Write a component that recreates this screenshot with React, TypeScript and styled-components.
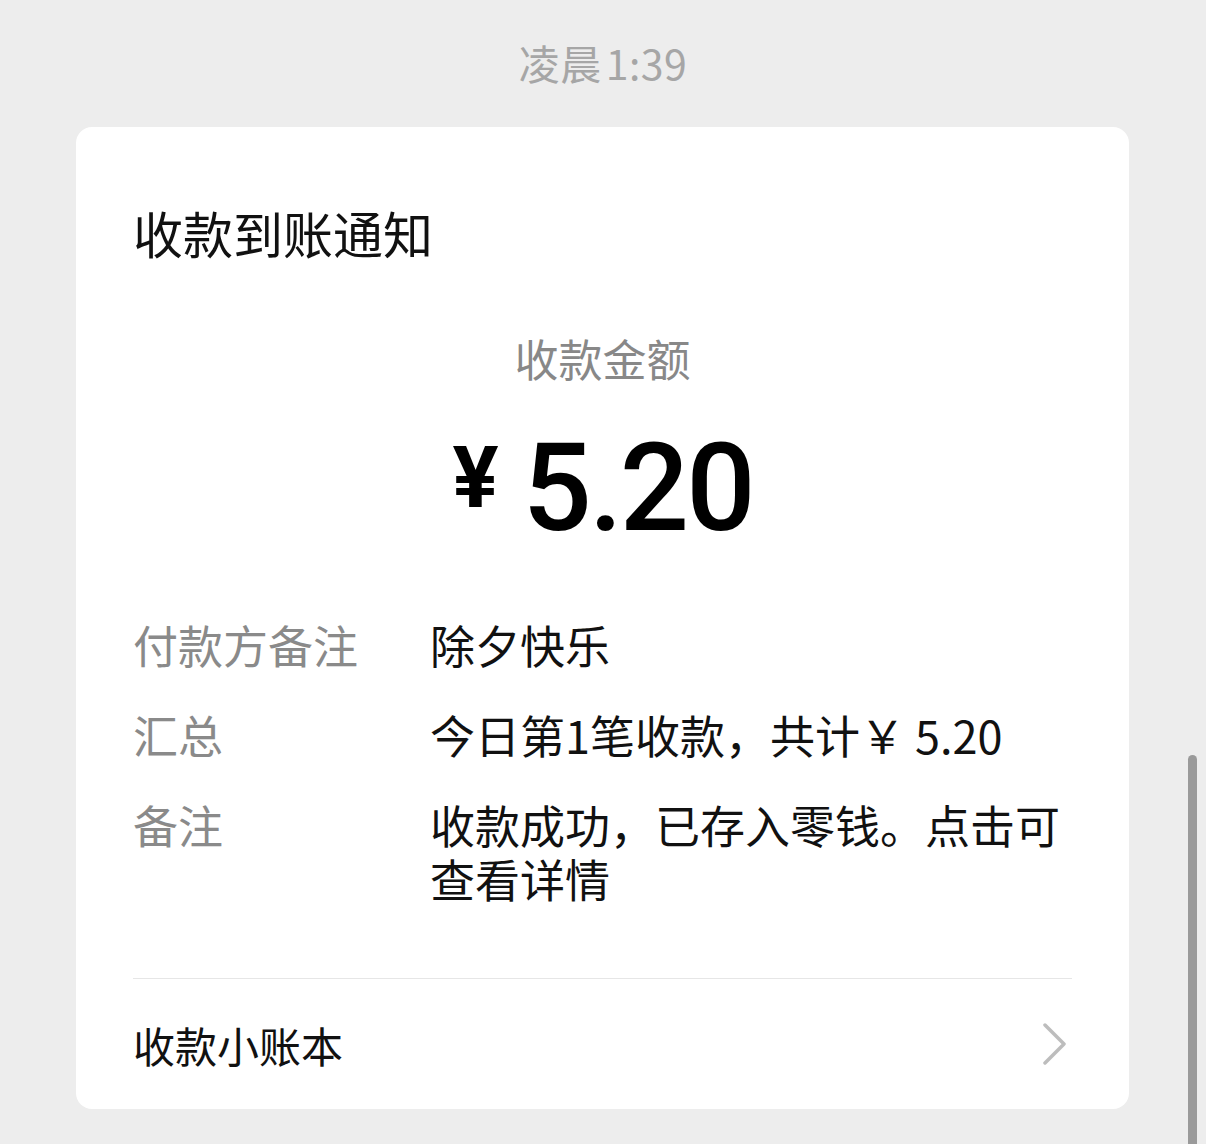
import React from "react";
import styled, { createGlobalStyle } from "styled-components";

const GlobalStyle = createGlobalStyle`
  html, body {
    margin: 0;
    padding: 0;
    background: #ededed;
  }
  body {
    font-family: "Noto Sans CJK SC", "Noto Sans", sans-serif;
    -webkit-font-smoothing: antialiased;
  }
`;

const Page = styled.div`
  min-height: 1144px;
  display: flex;
  flex-direction: column;
  align-items: center;
  padding-top: 38px;
  box-sizing: border-box;
`;

const TimeStamp = styled.div`
  font-size: 41px;
  line-height: 48px;
  color: #a6a6a6;
  letter-spacing: 0.5px;
`;

const TimeDigits = styled.span`
  margin-left: 4px;
`;

const Card = styled.div`
  margin-top: 41px;
  width: 1053px;
  margin-left: -1px;
  background: #ffffff;
  border-radius: 16px;
  padding: 71px 57px 0 57px;
  box-sizing: border-box;
  display: flex;
  flex-direction: column;
`;

const Title = styled.div`
  font-size: 50px;
  line-height: 68px;
  color: #111111;
`;

const AmountLabel = styled.div`
  margin-top: 62px;
  text-align: center;
  font-size: 44px;
  line-height: 60px;
  color: #888888;
`;

const AmountRow = styled.div`
  margin-top: 31px;
  height: 140px;
  display: flex;
  justify-content: center;
  align-items: flex-start;
  color: #000000;
  font-family: Roboto, "Liberation Sans", sans-serif;
`;

const Currency = styled.span`
  margin-top: 16px;
  margin-right: 24px;
  font-size: 86px;
  line-height: 86px;
  font-weight: 700;
`;

const Digits = styled.span`
  font-size: 122px;
  line-height: 140px;
  font-weight: 500;
  letter-spacing: -3px;
`;

const InfoList = styled.div`
  margin-top: 59px;
  display: flex;
  flex-direction: column;
  gap: 36px;
`;

const InfoRow = styled.div`
  display: grid;
  grid-template-columns: 297px 1fr;
  font-size: 45px;
  line-height: 54px;
`;

const InfoLabel = styled.div`
  color: #8a8a8a;
`;

const InfoValue = styled.div`
  color: #111111;
`;

const Divider = styled.div`
  margin-top: 72px;
  height: 1px;
  background: #e6e6e6;
`;

const FooterRow = styled.div`
  height: 130px;
  display: flex;
  align-items: center;
  justify-content: space-between;
  font-size: 42px;
  color: #111111;
  cursor: pointer;
`;

const Chevron = styled.svg`
  width: 26px;
  height: 42px;
  margin-right: 4px;
`;

const ScrollThumb = styled.div`
  position: absolute;
  top: 755px;
  right: 9px;
  width: 9px;
  height: 400px;
  border-radius: 5px 5px 0 0;
  background: #9a9a9a;
`;

type InfoItem = {
  label: string;
  value: string;
};

const infoItems: InfoItem[] = [
  { label: "付款方备注", value: "除夕快乐" },
  { label: "汇总", value: "今日第1笔收款，共计￥ 5.20" },
  { label: "备注", value: "收款成功，已存入零钱。点击可查看详情" },
];

const App = () => {
  return (
    <>
      <GlobalStyle />
      <Page>
        <TimeStamp>
          凌晨<TimeDigits>1:39</TimeDigits>
        </TimeStamp>
        <Card>
          <Title>收款到账通知</Title>
          <AmountLabel>收款金额</AmountLabel>
          <AmountRow>
            <Currency>¥</Currency>
            <Digits>5.20</Digits>
          </AmountRow>
          <InfoList>
            {infoItems.map((item) => (
              <InfoRow key={item.label}>
                <InfoLabel>{item.label}</InfoLabel>
                <InfoValue>{item.value}</InfoValue>
              </InfoRow>
            ))}
          </InfoList>
          <Divider />
          <FooterRow>
            <span>收款小账本</span>
            <Chevron viewBox="0 0 26 42" fill="none">
              <polyline
                points="3,2 22,21 3,40"
                stroke="#bdbdbd"
                strokeWidth="3.5"
                strokeLinecap="round"
                strokeLinejoin="round"
              />
            </Chevron>
          </FooterRow>
        </Card>
      </Page>
      <ScrollThumb />
    </>
  );
};

export default App;
